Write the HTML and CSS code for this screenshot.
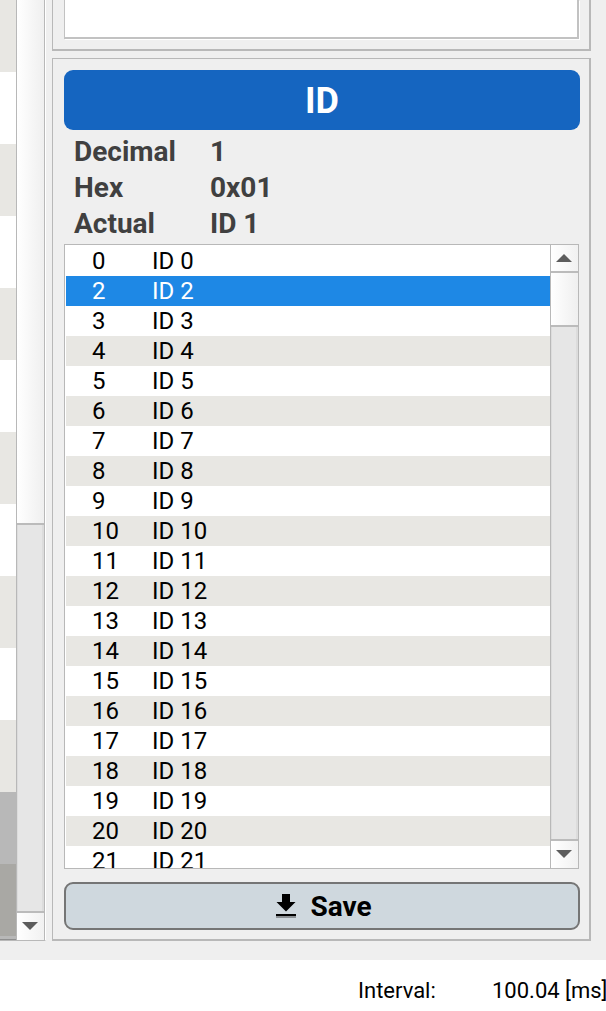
FILE: index.html
```
<!DOCTYPE html>
<html lang="en">
<head>
<meta charset="utf-8">
<title>ID</title>
<link rel="stylesheet" href="styles.css">
</head>
<body>
<main class="workspace">
  <section class="table">
    <div class="stripes">
      <i class="alt"></i><i></i><i class="alt"></i><i></i><i class="alt"></i><i></i><i class="alt"></i><i></i><i class="alt"></i><i></i><i class="alt"></i><i class="inactive"></i><i class="inactive-alt"></i><i class="inactive rest"></i>
    </div>
    <div class="scrollbar table-scroll">
      <div class="thumb"></div>
      <div class="trough"></div>
      <div class="arrow down"><svg width="16" height="8" viewBox="0 0 16 8"><path d="M0 0h16L8 8z"/></svg></div>
    </div>
  </section>
  <section class="panels">
    <div class="panel previous"><div class="box"></div></div>
    <div class="panel">
      <h1 class="title">ID</h1>
      <dl class="info">
        <dt>Decimal</dt><dd>1</dd>
        <dt>Hex</dt><dd>0x01</dd>
        <dt>Actual</dt><dd>ID 1</dd>
      </dl>
      <div class="list">
        <ul class="rows">
          <li><b>0</b>ID 0</li>
          <li class="selected"><b>2</b>ID 2</li>
          <li><b>3</b>ID 3</li>
          <li><b>4</b>ID 4</li>
          <li><b>5</b>ID 5</li>
          <li><b>6</b>ID 6</li>
          <li><b>7</b>ID 7</li>
          <li><b>8</b>ID 8</li>
          <li><b>9</b>ID 9</li>
          <li><b>10</b>ID 10</li>
          <li><b>11</b>ID 11</li>
          <li><b>12</b>ID 12</li>
          <li><b>13</b>ID 13</li>
          <li><b>14</b>ID 14</li>
          <li><b>15</b>ID 15</li>
          <li><b>16</b>ID 16</li>
          <li><b>17</b>ID 17</li>
          <li><b>18</b>ID 18</li>
          <li><b>19</b>ID 19</li>
          <li><b>20</b>ID 20</li>
          <li><b>21</b>ID 21</li>
        </ul>
        <div class="scrollbar">
          <div class="arrow up"><svg width="16" height="8" viewBox="0 0 16 8"><path d="M0 8h16L8 0z"/></svg></div>
          <div class="thumb"></div>
          <div class="trough"></div>
          <div class="arrow down"><svg width="16" height="8" viewBox="0 0 16 8"><path d="M0 0h16L8 8z"/></svg></div>
        </div>
      </div>
      <button class="save">
        <svg width="20" height="24" viewBox="0 0 20 24"><path d="M6 0h8v8h5.500L10 17.500.5 8H6z"/><path d="M0 20h20v2H0z"/><path d="M0 22h20v2H0z" fill="#8b9094"/></svg>
        <span>Save</span>
      </button>
    </div>
  </section>
</main>
<footer class="status"><span class="name">Interval:</span><span class="value">100.04 [ms]</span></footer>
</body>
</html>
```
FILE: styles.css
```
* { box-sizing: border-box; }
body {
  margin: 0;
  width: 606px;
  height: 1011px;
  overflow: hidden;
  background: #fff;
  font-family: Roboto, "Liberation Sans", sans-serif;
  color: #000;
}
.workspace {
  display: flex;
  height: 960px;
  background: #efefef;
}
.table {
  display: flex;
  width: 46px;
  height: 941px;
  border-right: 1px solid #fff;
  border-bottom: 1px solid #b8b8b8;
}
.stripes { width: 16px; overflow: hidden; }
.stripes i { display: block; height: 72px; background: #fff; }
.stripes .alt { background: #e8e7e3; }
.stripes .inactive { background: #b8b8b8; }
.stripes .inactive-alt { background: #a9a8a4; }
.stripes .rest { height: 4px; border-bottom: 1px solid #8f8f8f; }
.scrollbar {
  display: flex;
  flex-direction: column;
  width: 28px;
  border-left: 1px solid #b8b8b8;
}
.table-scroll { width: 29px; border-right: 1px solid #b8b8b8; }
.thumb {
  height: 54px;
  background: linear-gradient(90deg, #fff, #efefef);
  border-bottom: 2px solid #bbb;
}
.table-scroll .thumb { height: 525px; }
.trough {
  flex: 1;
  background: #e6e6e6;
  border: solid #dcdcdc;
  border-width: 0 2px 0 1px;
}
.arrow {
  display: flex;
  height: 28px;
  align-items: center;
  justify-content: center;
  background: linear-gradient(90deg, #fff, #f1f1f1);
}
.arrow svg { fill: #5c5c5c; }
.up { height: 28px; border-bottom: 2px solid #bbb; padding: 0 2px 0 0; }
.down { height: 29px; border-top: 2px solid #bbb; padding: 0 1px 1px 0; }
.panels { width: 539px; margin-left: 6px; }
.panel {
  height: 883px;
  padding: 11px 9px 0 11px;
  border: solid #b8b8b8;
  border-width: 1px 2px 2px 1px;
}
.previous { height: 51px; margin-bottom: 7px; padding-top: 0; border-top: 0; }
.box {
  width: 515px;
  height: 39px;
  background: #fff;
  border: solid #c2c2c2;
  border-width: 0 2px 2px 1px;
  box-shadow: 1px 1px #fff;
}
.title {
  margin: 0;
  height: 60px;
  border-radius: 9px;
  background: #1565c0;
  color: #fff;
  font-size: 36px;
  font-weight: 700;
  line-height: 62px;
  text-align: center;
}
.info {
  display: grid;
  grid-template-columns: 136px 1fr;
  grid-auto-rows: 36px;
  margin: 4px 0 2px 10px;
  color: #404040;
  font-size: 28px;
  font-weight: 700;
  line-height: 36px;
}
.info dd { margin: 0; }
.list {
  display: flex;
  width: 515px;
  height: 625px;
  background: #fff;
  border: 1px solid #b8b8b8;
}
.rows {
  flex: 1;
  margin: 0;
  padding: 1px 0 0 1px;
  overflow: hidden;
  list-style: none;
  font-size: 24px;
  line-height: 30px;
}
.rows li { display: flex; height: 30px; padding-left: 26px; white-space: pre; }
.rows li:nth-child(even) { background: #e8e7e3; }
.rows li.selected { background: #1e88e5; color: #fff; }
.rows b { width: 60px; font-weight: 400; }
.save {
  display: flex;
  align-items: center;
  justify-content: center;
  width: 516px;
  height: 48px;
  margin: 13px 0 0;
  padding: 0 0 0 4px;
  border: 2px solid #757575;
  border-radius: 9px;
  background: #cfd8de;
  color: #000;
  font: 700 28px Roboto, "Liberation Sans", sans-serif;
  gap: 14px;
}
.status {
  display: flex;
  height: 51px;
  padding: 16px 0 0 358px;
  font-size: 22px;
  line-height: 30px;
  white-space: nowrap;
}
.name { flex: none; width: 134px; }
.value { flex: none; }
```
